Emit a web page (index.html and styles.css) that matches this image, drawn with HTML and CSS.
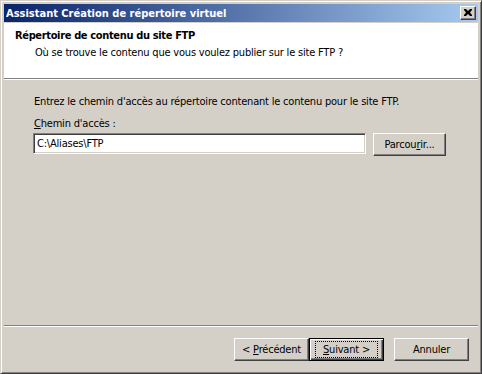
FILE: index.html
```html
<!DOCTYPE html>
<html lang="fr">
<head>
    <meta charset="UTF-8">
    <title>Assistant Création de répertoire virtuel</title>
    <link rel="stylesheet" href="styles.css">
</head>
<body>
    <div class="window">
        <div class="titlebar">
            <span class="caption">Assistant Création de répertoire virtuel</span>
            <div class="close">
                <svg width="8" height="7" viewBox="0 0 8 7">
                    <path d="M0 0h2l2 2 2-2h2v1l-2 2.5 2 2.5v1h-2l-2-2-2 2h-2v-1l2-2.5-2-2.5z" fill="#000"/>
                </svg>
            </div>
        </div>
        <div class="client">
            <div class="header">
                <div class="header-title">Répertoire de contenu du site FTP</div>
                <div class="header-sub">Où se trouve le contenu que vous voulez publier sur le site FTP ?</div>
            </div>
            <div class="content">
                <p class="intro">Entrez le chemin d'accès au répertoire contenant le contenu pour le site FTP.</p>
                <div class="label"><u>C</u>hemin d'accès :</div>
                <div class="path-row">
                    <div class="field">C:\Aliases\FTP</div>
                    <div class="btn browse"><span>Parcou<u>r</u>ir...</span></div>
                </div>
            </div>
            <div class="footer">
                <div class="btn"><span>&lt; <u>P</u>récédent</span></div>
                <div class="btn default"><span class="focus"><u>S</u>uivant &gt;</span></div>
                <div class="btn cancel"><span>Annuler</span></div>
            </div>
        </div>
    </div>
</body>
</html>
```

FILE: styles.css
```css
body {
    margin: 0;
    font-family: "DejaVu Sans Condensed", "DejaVu Sans", sans-serif;
    font-size: 11px;
    letter-spacing: -0.2px;
    color: #000;
}

.window {
    width: 482px;
    height: 374px;
    box-sizing: border-box;
    background: #d4d0c8;
    border: 1px solid;
    border-color: #d4d0c8 #404040 #404040 #d4d0c8;
    box-shadow: inset 1px 1px #fff, inset -1px -1px #808080;
    padding: 3px;
    display: flex;
    flex-direction: column;
}

.titlebar {
    height: 18px;
    margin-bottom: 1px;
    background: linear-gradient(to right, #0a246a, #a6caf0);
    display: flex;
    align-items: center;
    justify-content: space-between;
    padding: 0 2px;
}
.caption {
    color: #fff;
    font-weight: bold;
    white-space: nowrap;
    letter-spacing: 0;
}
.close {
    width: 16px;
    height: 14px;
    box-sizing: border-box;
    background: #d4d0c8;
    border: 1px solid;
    border-color: #fff #404040 #404040 #fff;
    box-shadow: inset -1px -1px #808080;
    display: flex;
    align-items: center;
    justify-content: center;
    padding-bottom: 1px;
}

.client {
    flex: 1;
    display: flex;
    flex-direction: column;
}

.header {
    height: 56px;
    background: #fff;
    border-bottom: 1px solid #808080;
    box-shadow: 0 1px #fff;
    padding: 6px 0 0 11px;
    box-sizing: border-box;
}
.header-title {
    font-weight: bold;
    line-height: 13px;
    letter-spacing: -0.35px;
}
.header-sub {
    margin: 4px 0 0 20px;
    line-height: 13px;
}

.content {
    flex: 1;
    padding: 15px 0 0 30px;
    margin-top: 1px;
    border-bottom: 1px solid #808080;
}
.intro {
    margin: 0;
    line-height: 13px;
}
.label {
    margin-top: 9px;
    line-height: 13px;
}
.path-row {
    display: flex;
    align-items: flex-start;
    margin-top: 3px;
}
.field {
    width: 333px;
    height: 21px;
    box-sizing: border-box;
    background: #fff;
    border: 1px solid;
    border-color: #808080 #fff #fff #808080;
    box-shadow: inset 1px 1px #404040, inset -1px -1px #d4d0c8;
    padding: 3px 0 0 3px;
    line-height: 13px;
    margin-left: -1px;
}

.btn {
    width: 75px;
    height: 23px;
    box-sizing: border-box;
    border: 1px solid;
    border-color: #fff #404040 #404040 #fff;
    box-shadow: inset -1px -1px #808080;
    display: flex;
    align-items: center;
    justify-content: center;
    white-space: nowrap;
}
.browse {
    width: 73px;
    margin-left: 7px;
}

.footer {
    height: 44px;
    box-sizing: border-box;
    border-top: 1px solid #fff;
    display: flex;
    justify-content: flex-end;
    padding: 11px 9px 0 0;
}
.default {
    border: 1px solid #000;
    box-shadow: inset 1px 1px #fff, inset -1px -1px #404040, inset -2px -2px #808080;
}
.focus {
    border: 1px dotted #000;
    padding: 1px 7px;
    line-height: 13px;
}
.cancel {
    margin-left: 10px;
}
```
